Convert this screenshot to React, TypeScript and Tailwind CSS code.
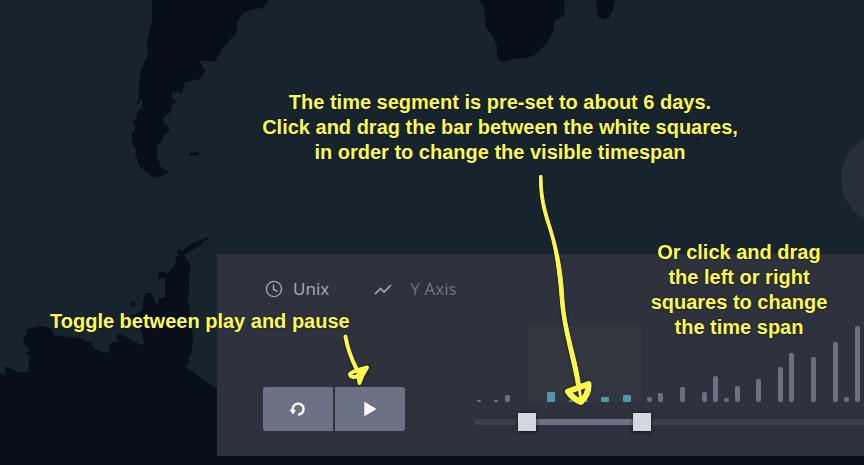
import { useState, type ReactNode } from "react";

type Bar = { x: number; height: number; active?: boolean };

const BARS: Bar[] = [
  { x: 5, height: 2 },
  { x: 22, height: 2 },
  { x: 33, height: 7 },
  { x: 77, height: 10, active: true },
  { x: 99, height: 2, active: true },
  { x: 110, height: 2, active: true },
  { x: 131, height: 5, active: true },
  { x: 153, height: 7, active: true },
  { x: 175, height: 5 },
  { x: 186, height: 9 },
  { x: 208, height: 15 },
  { x: 230, height: 10 },
  { x: 241, height: 26 },
  { x: 252, height: 4 },
  { x: 263, height: 16 },
  { x: 284, height: 23 },
  { x: 306, height: 35 },
  { x: 317, height: 49 },
  { x: 339, height: 45 },
  { x: 361, height: 60 },
  { x: 372, height: 5 },
  { x: 383, height: 76 },
];

const SLIDER_MAX = 372;

const THUMB =
  "pointer-events-none col-start-1 row-start-1 m-0 h-[18px] w-full appearance-none bg-transparent outline-none [&::-webkit-slider-runnable-track]:h-[18px] [&::-webkit-slider-runnable-track]:bg-transparent [&::-webkit-slider-thumb]:pointer-events-auto [&::-webkit-slider-thumb]:size-[18px] [&::-webkit-slider-thumb]:cursor-pointer [&::-webkit-slider-thumb]:appearance-none [&::-webkit-slider-thumb]:bg-[#d3d7e0] [&::-webkit-slider-thumb]:shadow-[0_1px_4px_#000a]";

function WorldMap() {
  return (
    <svg
      className="absolute top-0 left-0 h-[465px] w-[864px] max-w-none"
      viewBox="0 0 864 465"
      fill="#080f1b"
      aria-hidden="true"
    >
      <path d="M152 0V20L151 25L147 42L148 53L140 73L139 92L137 104H139L140 98L142 100V108L137 112V116L133 123L136 127L132 132V142L136 149L135 155L137 158L140 167L154 178L170 173L160 166L159 161L157 158V145L161 143L163 137L169 131V127L165 125L163 119L166 115L171 112L172 105L177 101L172 98V92L182 93L185 82L200 79L205 72L200 61H215L223 48L236 33L238 19L243 13L254 9L263 8L268 0Z" />
      <path d="M190 153L199 152L198 155L190 156Z" />
      <path d="M695 138L700 138L699 140L696 139Z" />
      <path d="M479 0L484 8L486 27L493 37L497 46V55L499 60L503 62L513 59L527 58L535 55L544 46L554 31V21L564 16L565 4L564 0Z" />
      <path d="M597 0L596 6L598 17L603 20L609 18L612 13L615 0Z" />
      <circle cx="133" cy="304" r="2" />
      <path d="M0 373L5 375V366L19 372H28L29 365L28 358L30 357L25 352L29 351L28 347L24 344L23 338L27 334L26 330L31 328L40 326L51 328L54 335L80 338L91 343L94 349L104 353L109 352V346L113 342H117V335L121 334L136 343L143 345L144 343L142 333L141 330L130 316L143 310V300L146 293H152L157 306L159 298L165 297V278L158 279V274L160 271L168 273L175 264L176 257L179 255L177 252L178 249L182 251L192 243L208 237L208 239L202 243L201 247L199 246L184 255L186 259L190 264V272L189 274V294L187 300L190 308V323L193 335L192 351L189 357V362L186 367L217 389L260 420L864 440V465H0Z" />
    </svg>
  );
}

function ActivityChart({ start, end }: { start: number; end: number }) {
  return (
    <svg
      className="block h-[76px] w-full overflow-hidden"
      role="img"
      aria-label="Events over time"
    >
      <rect x={start + 10} y="0" width={end - start - 1} height="76" fill="#31363f" />
      {BARS.map((bar) => {
        const width = bar.active ? 8 : bar.height < 3 ? 4 : 5;
        return (
          <rect
            key={bar.x}
            x={bar.active ? bar.x - 4 : bar.x - 2}
            y={76 - bar.height}
            width={width}
            height={bar.height}
            rx={Math.min(bar.height / 2, bar.active ? 1 : 2)}
            fill={bar.active ? "#4f96af" : "#6b7082"}
          />
        );
      })}
    </svg>
  );
}

function Note({ className, children }: { className: string; children: ReactNode }) {
  return (
    <p
      className={`absolute text-center text-[20px] leading-[25px] font-bold whitespace-nowrap text-[#fffb46] [text-shadow:0_0_2px_#030a3a] ${className}`}
    >
      {children}
    </p>
  );
}

function HandDrawnArrows() {
  return (
    <svg
      className="pointer-events-none absolute top-0 left-0 h-[465px] w-[864px] max-w-none [filter:drop-shadow(0_0_1px_#030a3a)]"
      viewBox="0 0 864 465"
      fill="none"
      stroke="#fff94a"
      strokeLinecap="round"
      strokeLinejoin="round"
      aria-hidden="true"
    >
      <path
        fill="#fff94a"
        strokeWidth="1"
        d="M539.500 176C539 202 545 217 550 233C555 250 558 272 560 296C562 329 572 357 577 388L581 388C577 358 566 330 564 301C563 276 559 254 554 237C549 218 542 204 542 176Z"
      />
      <path strokeWidth="3" d="M579 387L581 400" />
      <path strokeWidth="6" d="M588.500 384L568 391.500C571 396 576 400 581 402C584 399 589 392 588.500 384Z" />
      <path strokeWidth="4" d="M345.500 336.500C347 346 352 360 357 370" />
      <path strokeWidth="4" d="M367 367.500C361 369 352 371 350 374C350 377 355 378 358 375.500C361 374 364 370 367 367.500C364 372 361 378 359.500 383C359 380 358 377 359 374" />
      <path strokeWidth="3" d="M357 372L363 370" />
    </svg>
  );
}

export default function App() {
  const [start, setStart] = useState(44);
  const [end, setEnd] = useState(159);
  const [playing, setPlaying] = useState(false);

  return (
    <main className="relative flex min-h-screen flex-col justify-end overflow-hidden bg-[#17242e] pb-[9px] pl-[217px] font-['Liberation_Sans',Arial,sans-serif]">
      <WorldMap />
      <div className="absolute top-[133px] left-[841px] size-[92px] rounded-full bg-[#292f39]" />

      <section
        aria-label="Time playback"
        className="relative bg-[#2d323c] pt-[23px] pb-[25px] pl-[46px]"
      >
        <div className="flex h-6 items-center pl-[2px] font-['Noto_Sans',sans-serif] text-[17px] leading-6">
          <button type="button" className="flex items-center gap-[10px] text-[#a0a7b4]">
            <svg className="size-[18px]" viewBox="0 0 18 18" fill="none" stroke="currentColor" aria-hidden="true">
              <circle cx="9" cy="9" r="7.600" strokeWidth="1.400" />
              <path d="M8.500 4.500V9.500L12.500 11.500" strokeWidth="1.400" />
            </svg>
            Unix
          </button>
          <button type="button" className="ml-[45px] flex items-center gap-[18px] text-[#6a7080]">
            <svg className="size-[18px]" viewBox="0 0 18 18" fill="none" stroke="#a0a7b4" aria-hidden="true">
              <path d="M1 14L6.500 8.500L10 12L17 5" strokeWidth="1.700" />
            </svg>
            Y Axis
          </button>
        </div>

        <div className="mt-[25px] flex items-end gap-[69px]">
          <div className="flex shrink-0 gap-[2px]">
            <button
              type="button"
              aria-label="Reset"
              onClick={() => {
                setStart(44);
                setEnd(159);
              }}
              className="flex h-11 w-[70px] items-center justify-center rounded-l-[3px] bg-[#6c7283] text-white"
            >
              <svg className="size-4" viewBox="0 0 16 16" fill="none" aria-hidden="true">
                <path d="M2.800 9.500A5.500 5.500 0 1 1 8 13.600" stroke="currentColor" strokeWidth="2.400" />
                <path d="M-.5 8.500L6 9L3 13.500Z" fill="currentColor" />
              </svg>
            </button>
            <button
              type="button"
              aria-label={playing ? "Pause" : "Play"}
              onClick={() => setPlaying(!playing)}
              className="flex h-11 w-[70px] items-center justify-center rounded-r-[3px] bg-[#6c7283] text-white"
            >
              <svg className="size-4" viewBox="0 0 16 16" fill="currentColor" aria-hidden="true">
                {playing ? <path d="M3 2H7V14H3ZM9 2H13V14H9Z" /> : <path d="M2.300 1.500C2.300 1 2.800 .9 3.200 1.200L13.700 7.400C14.200 7.700 14.200 8 13.700 8.400L3.200 14.800C2.800 15 2.300 14.900 2.300 14.400Z" />}
              </svg>
            </button>
          </div>

          <div className="flex min-w-0 flex-1 flex-col gap-[11px]">
            <ActivityChart start={start} end={end} />
            <div className="grid items-center">
              <div className="col-start-1 row-start-1 h-[6px] bg-[#3b404a]">
                <div
                  className="h-full bg-[#6c7283]"
                  style={{
                    marginLeft: `${(start / SLIDER_MAX) * 100}%`,
                    width: `${((end - start) / SLIDER_MAX) * 100}%`,
                  }}
                />
              </div>
              <input
                type="range"
                aria-label="Time span start"
                min={0}
                max={SLIDER_MAX}
                value={start}
                onChange={(e) => setStart(Math.min(Number(e.target.value), end))}
                className={THUMB}
              />
              <input
                type="range"
                aria-label="Time span end"
                min={0}
                max={SLIDER_MAX}
                value={end}
                onChange={(e) => setEnd(Math.max(Number(e.target.value), start))}
                className={THUMB}
              />
            </div>
          </div>
        </div>
      </section>

      <Note className="top-[90px] left-[500px] -translate-x-1/2">
        The time segment is pre-set to about 6 days.
        <br />
        Click and drag the bar between the white squares,
        <br />
        in order to change the visible timespan
      </Note>
      <Note className="top-[309px] left-[50px]">Toggle between play and pause</Note>
      <Note className="top-[240px] left-[739px] -translate-x-1/2">
        Or click and drag
        <br />
        the left or right
        <br />
        squares to change
        <br />
        the time span
      </Note>
      <HandDrawnArrows />
    </main>
  );
}
